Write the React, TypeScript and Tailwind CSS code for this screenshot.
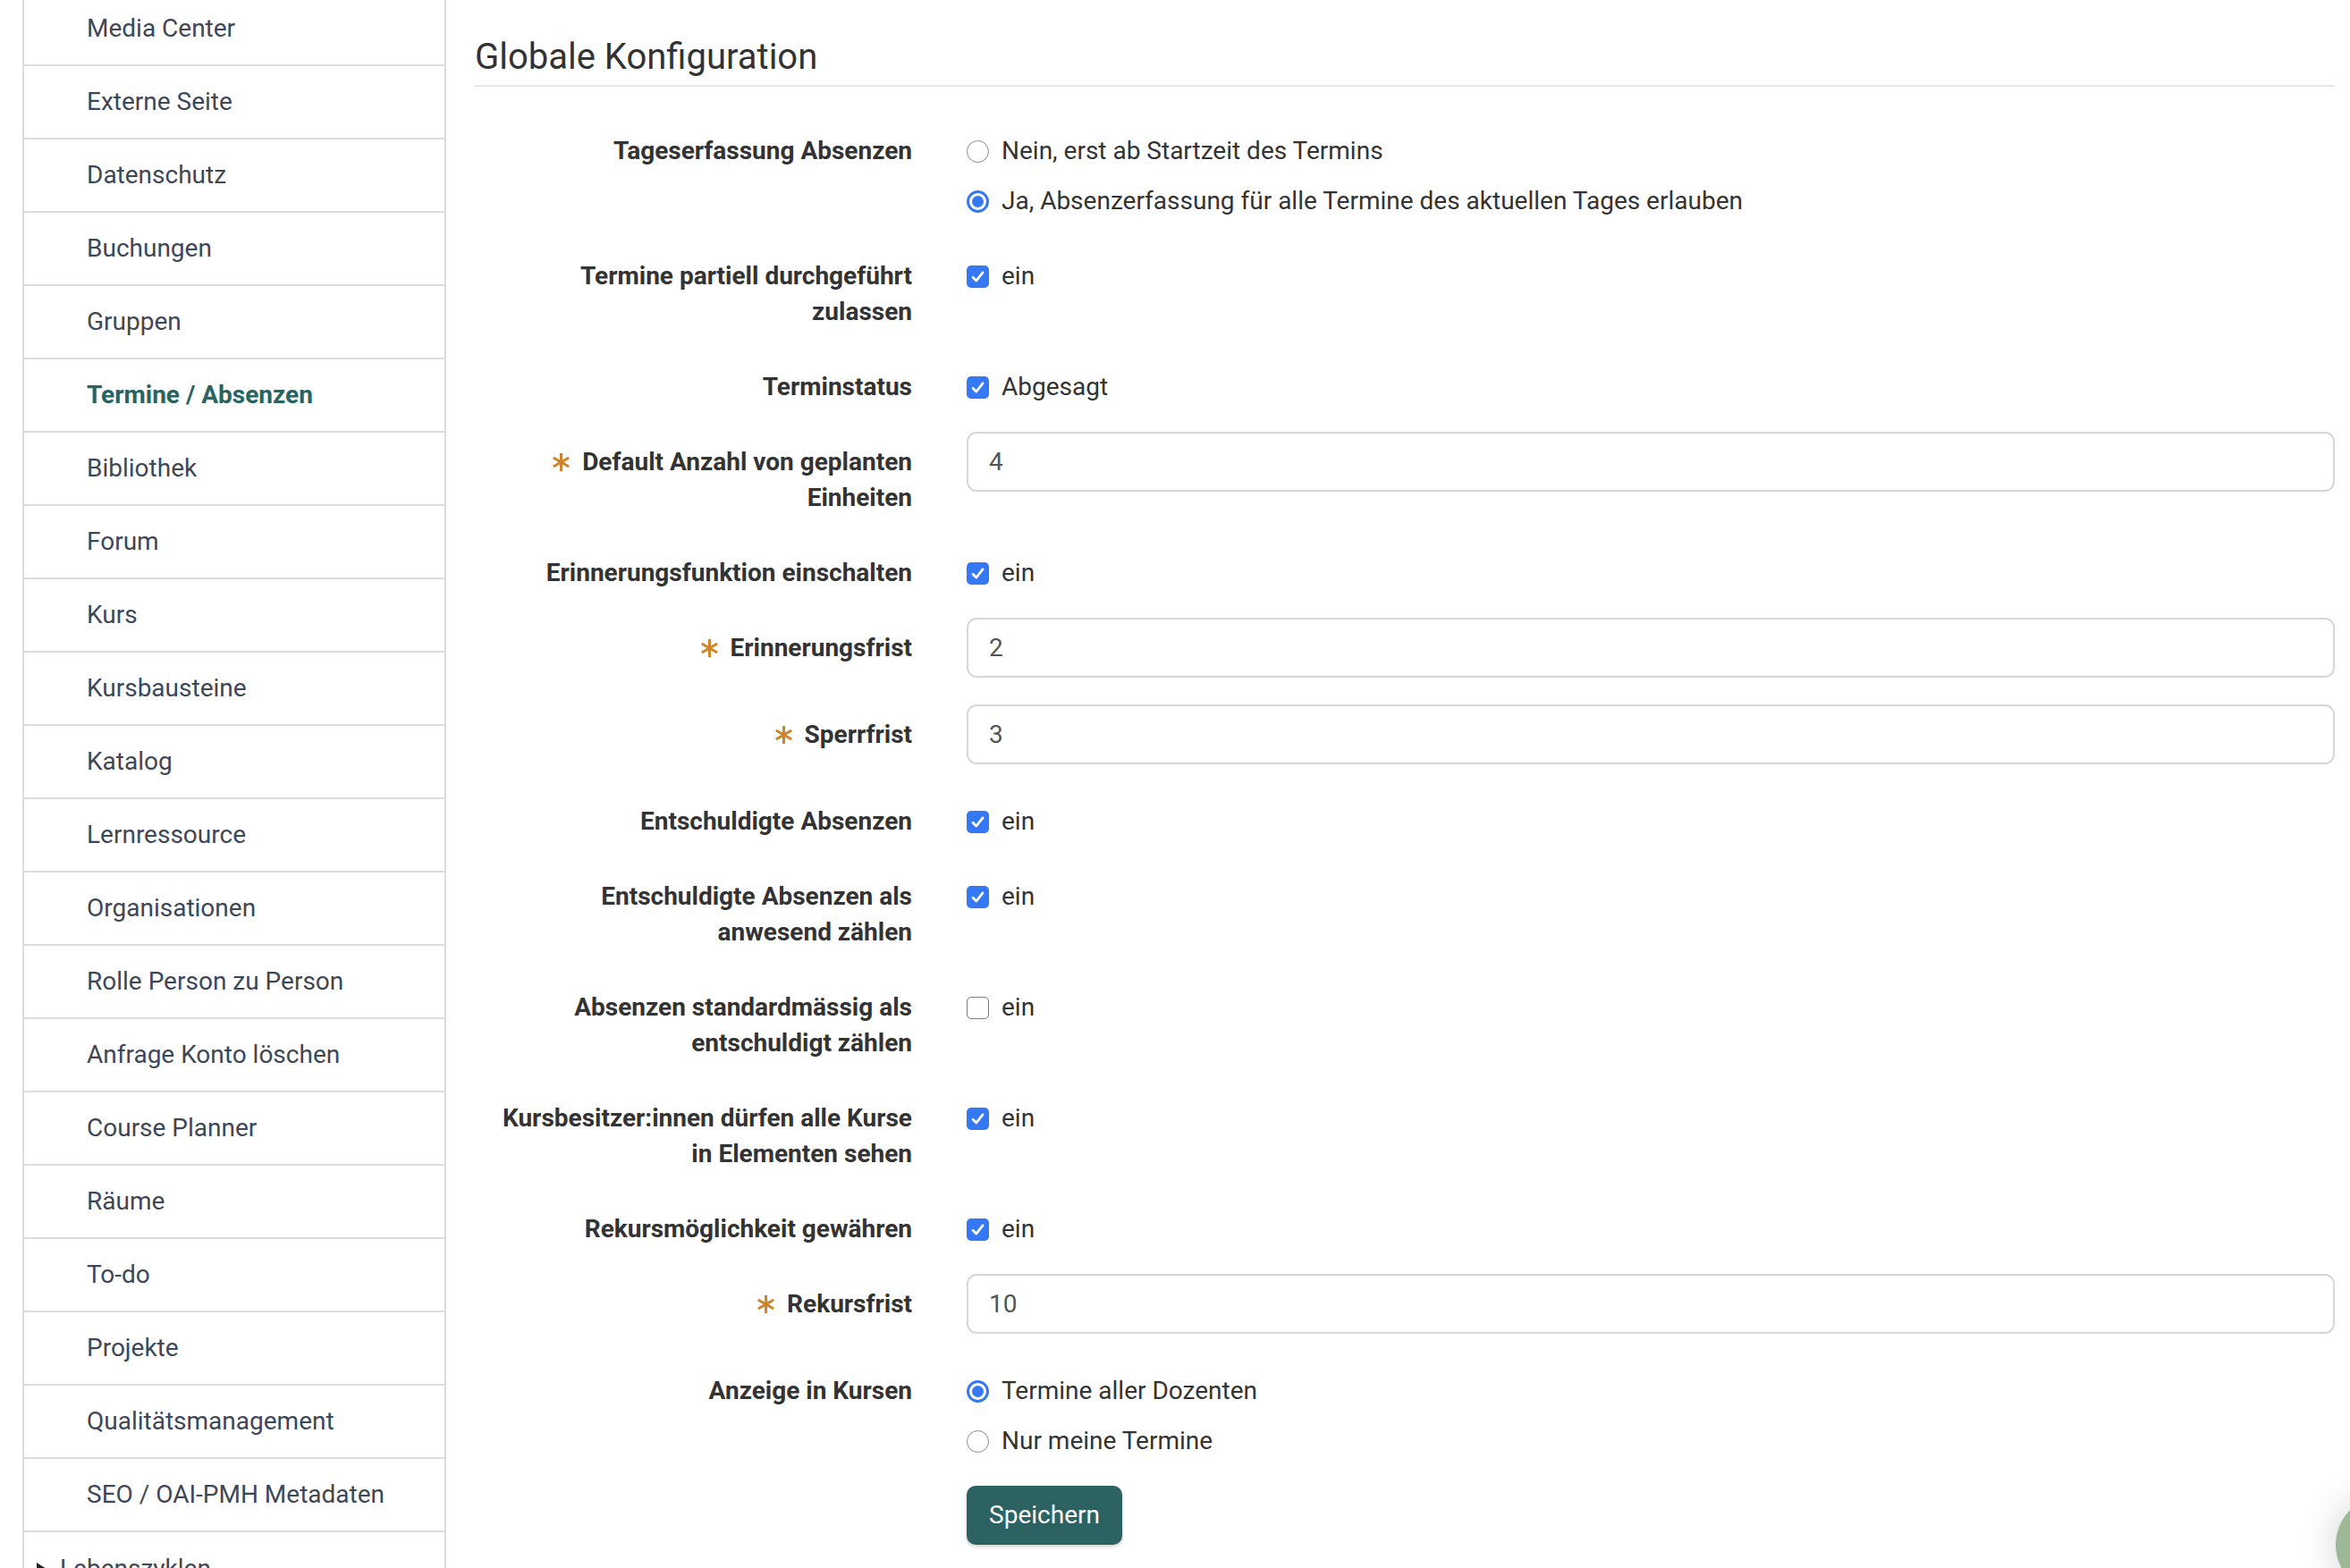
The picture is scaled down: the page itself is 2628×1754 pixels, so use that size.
import React from "react";

const menu = [
  "Media Center",
  "Externe Seite",
  "Datenschutz",
  "Buchungen",
  "Gruppen",
  "Termine / Absenzen",
  "Bibliothek",
  "Forum",
  "Kurs",
  "Kursbausteine",
  "Katalog",
  "Lernressource",
  "Organisationen",
  "Rolle Person zu Person",
  "Anfrage Konto löschen",
  "Course Planner",
  "Räume",
  "To-do",
  "Projekte",
  "Qualitätsmanagement",
  "SEO / OAI-PMH Metadaten",
];

function Asterisk() {
  return (
    <svg
      width="21"
      height="22"
      viewBox="0 0 22 22"
      className="inline-block align-[-2px] mr-[13px]"
    >
      <g stroke="#cf8429" strokeWidth="3.2">
        <line x1="11" y1="0.5" x2="11" y2="21.5" />
        <line x1="1.9" y1="5.75" x2="20.1" y2="16.25" />
        <line x1="1.9" y1="16.25" x2="20.1" y2="5.75" />
      </g>
    </svg>
  );
}

function Checkbox({ checked }: { checked: boolean }) {
  if (!checked) {
    return (
      <span className="w-[25px] h-[25px] rounded-[5px] border-[1.5px] border-[#7c7c7c] bg-white shrink-0" />
    );
  }
  return (
    <span className="w-[25px] h-[25px] rounded-[5px] bg-[#3478f6] shrink-0 flex items-center justify-center">
      <svg width="17" height="17" viewBox="0 0 17 17">
        <path
          d="M3 9.2 L6.8 13 L14 3.8"
          fill="none"
          stroke="white"
          strokeWidth="2.8"
          strokeLinecap="round"
          strokeLinejoin="round"
        />
      </svg>
    </span>
  );
}

function Radio({ checked }: { checked: boolean }) {
  if (!checked) {
    return (
      <span className="w-[25px] h-[25px] rounded-full border-[1.5px] border-[#8a8a8a] bg-white shrink-0" />
    );
  }
  return (
    <span className="w-[25px] h-[25px] rounded-full border-[3px] border-[#3478f6] bg-white shrink-0 flex items-center justify-center">
      <span className="w-[13px] h-[13px] rounded-full bg-[#3478f6]" />
    </span>
  );
}

function Label({ lines, required }: { lines: string[]; required?: boolean }) {
  return (
    <div className="w-[489px] shrink-0 pt-[14px] text-right font-bold leading-[40px] whitespace-nowrap text-[#333]">
      {lines.map((l, i) => (
        <div key={i}>
          {i === 0 && required ? <Asterisk /> : null}
          {l}
        </div>
      ))}
    </div>
  );
}

function CheckRow({ lines, text, checked }: { lines: string[]; text: string; checked: boolean }) {
  return (
    <div className="flex mb-[30px]">
      <Label lines={lines} />
      <div className="ml-[61px] flex-1 pt-[14px]">
        <div className="h-[40px] flex items-center gap-[14px]">
          <Checkbox checked={checked} />
          <span>{text}</span>
        </div>
      </div>
    </div>
  );
}

function InputRow({ lines, value }: { lines: string[]; value: string }) {
  return (
    <div className="flex mb-[30px]">
      <Label lines={lines} required />
      <div className="ml-[61px] flex-1">
        <div className="h-[67px] border-2 border-[#d5d7db] rounded-[11px] px-[23px] flex items-center text-[#555]">
          {value}
        </div>
      </div>
    </div>
  );
}

function RadioRow({
  lines,
  options,
  selected,
  className = "",
}: {
  lines: string[];
  options: string[];
  selected: number;
  className?: string;
}) {
  return (
    <div className={"flex mb-[30px] " + className}>
      <Label lines={lines} />
      <div className="ml-[61px] flex-1 pt-[14px] flex flex-col gap-[16px]">
        {options.map((o, i) => (
          <div key={o} className="h-[40px] flex items-center gap-[14px]">
            <Radio checked={i === selected} />
            <span>{o}</span>
          </div>
        ))}
      </div>
    </div>
  );
}

export default function App() {
  return (
    <div
      className="relative w-[2628px] h-[1754px] overflow-hidden bg-white flex text-[28px] text-[#333]"
      style={{ fontFamily: "Roboto, 'Liberation Sans', sans-serif" }}
    >
      <aside className="ml-[25px] w-[474px] shrink-0 -mt-[8px] border-x-2 border-[#dcdcdc] self-start">
        {menu.map((m) => {
          const active = m === "Termine / Absenzen";
          return (
            <div
              key={m}
              className={
                "h-[82px] border-b-2 border-[#dcdcdc] flex items-center pl-[70px] " +
                (active ? "font-bold text-[#2a6461]" : "text-[#3e4757]")
              }
            >
              {m}
            </div>
          );
        })}
        <div className="h-[82px] flex items-center pl-[13px] gap-[14px] text-[#3e4757]">
          <svg width="13" height="16" viewBox="0 0 13 16">
            <polygon points="1,1 12,8 1,15" fill="#222" />
          </svg>
          <span>Lebenszyklen</span>
        </div>
      </aside>

      <main className="pl-[32px] w-[2112px] shrink-0">
        <h2 className="pt-[42px] pb-[9px] text-[40px] leading-[44px] font-normal text-[#333] border-b-2 border-[#e6e6e6]">
          Globale Konfiguration
        </h2>

        <form className="mt-[38px]">
          <RadioRow
            lines={["Tageserfassung Absenzen"]}
            options={[
              "Nein, erst ab Startzeit des Termins",
              "Ja, Absenzerfassung für alle Termine des aktuellen Tages erlauben",
            ]}
            selected={1}
          />
          <CheckRow lines={["Termine partiell durchgeführt", "zulassen"]} text="ein" checked />
          <CheckRow lines={["Terminstatus"]} text="Abgesagt" checked />
          <InputRow lines={["Default Anzahl von geplanten", "Einheiten"]} value="4" />
          <CheckRow lines={["Erinnerungsfunktion einschalten"]} text="ein" checked />
          <InputRow lines={["Erinnerungsfrist"]} value="2" />
          <InputRow lines={["Sperrfrist"]} value="3" />
          <CheckRow lines={["Entschuldigte Absenzen"]} text="ein" checked />
          <CheckRow lines={["Entschuldigte Absenzen als", "anwesend zählen"]} text="ein" checked />
          <CheckRow lines={["Absenzen standardmässig als", "entschuldigt zählen"]} text="ein" checked={false} />
          <CheckRow lines={["Kursbesitzer:innen dürfen alle Kurse", "in Elementen sehen"]} text="ein" checked />
          <CheckRow lines={["Rekursmöglichkeit gewähren"]} text="ein" checked />
          <InputRow lines={["Rekursfrist"]} value="10" />
          <RadioRow
            lines={["Anzeige in Kursen"]}
            options={["Termine aller Dozenten", "Nur meine Termine"]}
            selected={0}
            className="mt-[3px]"
          />
          <div className="flex">
            <div className="w-[489px] shrink-0" />
            <button
              type="button"
              className="ml-[61px] w-[174px] h-[66px] rounded-[10px] bg-[#2d6262] text-white text-[28px] shadow-[0_2px_4px_rgba(0,0,0,0.2)]"
            >
              Speichern
            </button>
          </div>
        </form>
      </main>

      <div className="absolute left-[2612px] top-[1673px] w-[110px] h-[110px] rounded-full bg-[#9db897] shadow-[0_0_40px_rgba(0,0,0,0.18)]" />
    </div>
  );
}
